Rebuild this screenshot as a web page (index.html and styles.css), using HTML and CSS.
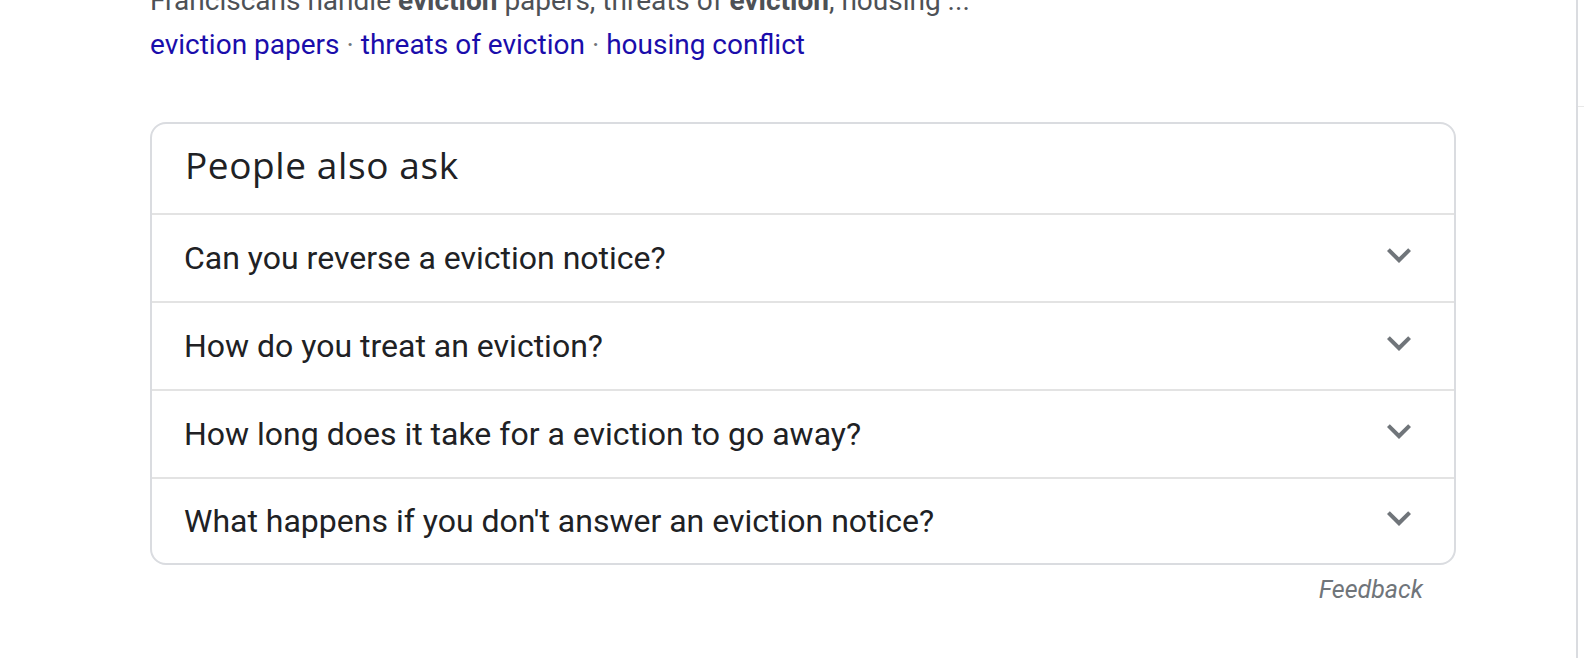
FILE: index.html
```html
<!DOCTYPE html>
<html lang="en">
<head>
<meta charset="utf-8">
<title>People also ask</title>
<link rel="stylesheet" href="styles.css">
</head>
<body>
<div class="layout">
  <main class="main">
    <div class="result">
      <div class="snippet">Franciscans handle <b>eviction</b> papers, threats of <b>eviction</b>, housing ...</div>
      <div class="sitelinks"><a class="link">eviction papers</a><span class="sep"> · </span><a class="link">threats of eviction</a><span class="sep"> · </span><a class="link">housing conflict</a></div>
    </div>
    <section class="paa">
      <h2 class="paa-title">People also ask</h2>
      <div class="paa-row"><span class="q">Can you reverse a eviction notice?</span><svg class="chev" viewBox="0 0 24 24"><path d="M16.59 8.59L12 13.17 7.41 8.59 6 10l6 6 6-6z"/></svg></div>
      <div class="paa-row"><span class="q">How do you treat an eviction?</span><svg class="chev" viewBox="0 0 24 24"><path d="M16.59 8.59L12 13.17 7.41 8.59 6 10l6 6 6-6z"/></svg></div>
      <div class="paa-row"><span class="q">How long does it take for a eviction to go away?</span><svg class="chev" viewBox="0 0 24 24"><path d="M16.59 8.59L12 13.17 7.41 8.59 6 10l6 6 6-6z"/></svg></div>
      <div class="paa-row last"><span class="q">What happens if you don't answer an eviction notice?</span><svg class="chev" viewBox="0 0 24 24"><path d="M16.59 8.59L12 13.17 7.41 8.59 6 10l6 6 6-6z"/></svg></div>
    </section>
    <div class="feedback">Feedback</div>
  </main>
  <aside class="side"><div class="tick"></div></aside>
</div>
</body>
</html>
```
FILE: styles.css
```css
html, body {
  margin: 0;
  padding: 0;
  background: #fff;
  overflow: hidden;
}
body {
  font-family: Roboto, "Liberation Sans", Arial, sans-serif;
  color: #202124;
}
.layout {
  display: flex;
  height: 658px;
  overflow: hidden;
}
.main {
  flex: 0 0 1576px;
  box-sizing: border-box;
  padding-left: 150px;
}
.result {
  width: 1306px;
  margin-top: -21px;
}
.snippet {
  font-size: 28px;
  line-height: 44px;
  color: #4d5156;
  white-space: nowrap;
}
.snippet b {
  font-weight: 700;
  color: #4d5156;
}
.sitelinks {
  font-size: 28px;
  line-height: 44px;
  white-space: nowrap;
}
.link {
  color: #1a0dab;
  text-decoration: none;
}
.sep {
  color: #70757a;
}
.paa {
  width: 1306px;
  box-sizing: border-box;
  margin-top: 55px;
  border: 2px solid #dadce0;
  border-radius: 16px;
  overflow: hidden;
}
.paa-title {
  margin: 0;
  padding: 0 32px 7px 33px;
  font-family: "Open Sans", Roboto, sans-serif;
  font-weight: 400;
  font-size: 37px;
  letter-spacing: 0.6px;
  line-height: 82px;
  color: #202124;
}
.paa-row {
  display: flex;
  align-items: center;
  height: 86px;
  padding: 0 31px 0 32px;
  border-top: 2px solid #e3e3e3;
}
.paa-row.last {
  height: 84px;
}
.q {
  font-size: 32px;
  line-height: 48px;
  color: #202124;
}
.chev {
  margin-left: auto;
  margin-bottom: 7px;
  width: 48px;
  height: 48px;
  fill: #70757a;
}
.feedback {
  width: 1306px;
  box-sizing: border-box;
  padding-right: 33px;
  margin-top: 9px;
  text-align: right;
  font-style: italic;
  font-size: 25px;
  line-height: 32px;
  color: #70757a;
}
.side {
  flex: 1;
  border-left: 2px solid #dadce0;
}
.tick {
  margin-top: 106px;
  height: 1px;
  background: #e8e8e8;
}
```
